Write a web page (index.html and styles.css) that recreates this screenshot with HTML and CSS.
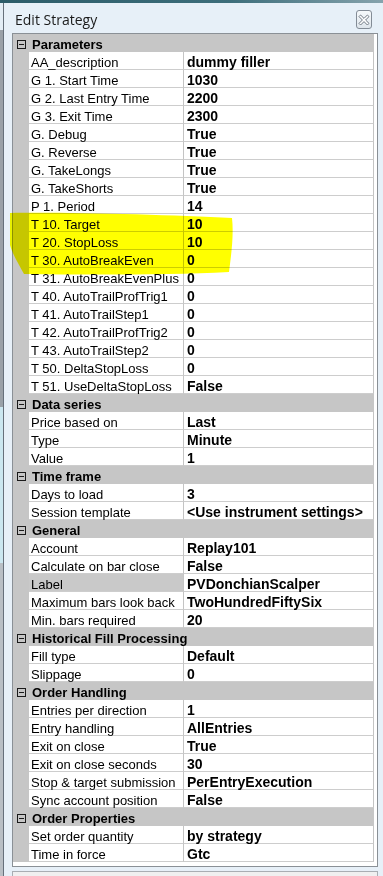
FILE: index.html
```html
<!DOCTYPE html>
<html lang="en">
<head>
    <meta charset="UTF-8">
    <title>Edit Strategy</title>
    <link rel="stylesheet" href="styles.css">
</head>
<body>
    <div class="topbar"></div>
    <div class="screen">
        <div class="behind"></div>
        <div class="window">
            <div class="titlebar">
                <span class="title">Edit Strategy</span>
                <span class="close">
                    <svg width="12" height="12" viewBox="0 0 12 12">
                        <path d="M1 2.6L2.6 1L6 4.4L9.4 1L11 2.6L7.6 6L11 9.4L9.4 11L6 7.6L2.6 11L1 9.4L4.4 6Z" fill="#fff" stroke="#6f7883" stroke-width="1" stroke-linejoin="round"/>
                    </svg>
                </span>
            </div>

            <div class="propgrid">
                <div class="rows">
                    <div class="cat"><span class="toggle"></span>Parameters</div>
                    <div class="row"><span class="gutter"></span><span class="name">AA_description</span><span class="value">dummy filler</span></div>
                    <div class="row"><span class="gutter"></span><span class="name">G 1. Start Time</span><span class="value">1030</span></div>
                    <div class="row"><span class="gutter"></span><span class="name">G 2. Last Entry Time</span><span class="value">2200</span></div>
                    <div class="row"><span class="gutter"></span><span class="name">G 3. Exit Time</span><span class="value">2300</span></div>
                    <div class="row"><span class="gutter"></span><span class="name">G. Debug</span><span class="value">True</span></div>
                    <div class="row"><span class="gutter"></span><span class="name">G. Reverse</span><span class="value">True</span></div>
                    <div class="row"><span class="gutter"></span><span class="name">G. TakeLongs</span><span class="value">True</span></div>
                    <div class="row"><span class="gutter"></span><span class="name">G. TakeShorts</span><span class="value">True</span></div>
                    <div class="row"><span class="gutter"></span><span class="name">P 1. Period</span><span class="value">14</span></div>
                    <div class="row"><span class="gutter"></span><span class="name">T 10. Target</span><span class="value">10</span></div>
                    <div class="row"><span class="gutter"></span><span class="name">T 20. StopLoss</span><span class="value">10</span></div>
                    <div class="row"><span class="gutter"></span><span class="name">T 30. AutoBreakEven</span><span class="value">0</span></div>
                    <div class="row"><span class="gutter"></span><span class="name">T 31. AutoBreakEvenPlus</span><span class="value">0</span></div>
                    <div class="row"><span class="gutter"></span><span class="name">T 40. AutoTrailProfTrig1</span><span class="value">0</span></div>
                    <div class="row"><span class="gutter"></span><span class="name">T 41. AutoTrailStep1</span><span class="value">0</span></div>
                    <div class="row"><span class="gutter"></span><span class="name">T 42. AutoTrailProfTrig2</span><span class="value">0</span></div>
                    <div class="row"><span class="gutter"></span><span class="name">T 43. AutoTrailStep2</span><span class="value">0</span></div>
                    <div class="row"><span class="gutter"></span><span class="name">T 50. DeltaStopLoss</span><span class="value">0</span></div>
                    <div class="row"><span class="gutter"></span><span class="name">T 51. UseDeltaStopLoss</span><span class="value">False</span></div>

                    <div class="cat"><span class="toggle"></span>Data series</div>
                    <div class="row"><span class="gutter"></span><span class="name">Price based on</span><span class="value">Last</span></div>
                    <div class="row"><span class="gutter"></span><span class="name">Type</span><span class="value">Minute</span></div>
                    <div class="row"><span class="gutter"></span><span class="name">Value</span><span class="value">1</span></div>

                    <div class="cat"><span class="toggle"></span>Time frame</div>
                    <div class="row"><span class="gutter"></span><span class="name">Days to load</span><span class="value">3</span></div>
                    <div class="row"><span class="gutter"></span><span class="name">Session template</span><span class="value">&lt;Use instrument settings&gt;</span></div>

                    <div class="cat"><span class="toggle"></span>General</div>
                    <div class="row"><span class="gutter"></span><span class="name">Account</span><span class="value">Replay101</span></div>
                    <div class="row"><span class="gutter"></span><span class="name">Calculate on bar close</span><span class="value">False</span></div>
                    <div class="row"><span class="gutter"></span><span class="name selected">Label</span><span class="value">PVDonchianScalper</span></div>
                    <div class="row"><span class="gutter"></span><span class="name">Maximum bars look back</span><span class="value">TwoHundredFiftySix</span></div>
                    <div class="row"><span class="gutter"></span><span class="name">Min. bars required</span><span class="value">20</span></div>

                    <div class="cat"><span class="toggle"></span>Historical Fill Processing</div>
                    <div class="row"><span class="gutter"></span><span class="name">Fill type</span><span class="value">Default</span></div>
                    <div class="row"><span class="gutter"></span><span class="name">Slippage</span><span class="value">0</span></div>

                    <div class="cat"><span class="toggle"></span>Order Handling</div>
                    <div class="row"><span class="gutter"></span><span class="name">Entries per direction</span><span class="value">1</span></div>
                    <div class="row"><span class="gutter"></span><span class="name">Entry handling</span><span class="value">AllEntries</span></div>
                    <div class="row"><span class="gutter"></span><span class="name">Exit on close</span><span class="value">True</span></div>
                    <div class="row"><span class="gutter"></span><span class="name">Exit on close seconds</span><span class="value">30</span></div>
                    <div class="row"><span class="gutter"></span><span class="name">Stop &amp; target submission</span><span class="value">PerEntryExecution</span></div>
                    <div class="row"><span class="gutter"></span><span class="name">Sync account position</span><span class="value">False</span></div>

                    <div class="cat"><span class="toggle"></span>Order Properties</div>
                    <div class="row"><span class="gutter"></span><span class="name">Set order quantity</span><span class="value">by strategy</span></div>
                    <div class="row"><span class="gutter"></span><span class="name">Time in force</span><span class="value">Gtc</span></div>
                </div>
            </div>
            <div class="help"></div>
        </div>
    </div>

    <!-- highlighter stroke over the T 10 - T 30 rows -->
    <svg class="marker" width="383" height="876" viewBox="0 0 383 876">
        <path d="M10 213 C70 212 170 215 232 218 C234 236 231 256 229 272 C170 275 90 275 24 274 C18 263 12 253 10 245 Z" fill="#ffff00"/>
    </svg>
</body>
</html>
```

FILE: styles.css
```css
body {
    margin: 0;
    width: 383px;
    height: 876px;
    overflow: hidden;
    background-color: #e7f0f8;
    font-family: "Liberation Sans", Arial, sans-serif;
    color: #000;
}
.topbar {
    height: 3px;
    background: linear-gradient(to right, #2c5c69, #3d6e7b 60%, #86a3ad);
}
.screen {
    display: flex;
}
.behind {
    width: 3px;
    height: 873px;
    background: linear-gradient(to bottom, #e3edf5 0, #e3edf5 27px, #9aa1a8 27px, #9aa1a8 404px, #cbe7f0 404px, #cbe7f0 560px, #b9bfc5 560px);
}
.window {
    width: 371px;
    border-left: 1px solid #66707b;
    padding-left: 8px;
    background-color: #e7f0f8;
}

/* title bar */
.titlebar {
    display: flex;
    align-items: flex-start;
    height: 23px;
    padding-top: 7px;
}
.title {
    margin-left: 3px;
    font-family: "Open Sans", sans-serif;
    font-size: 14px;
    line-height: 19px;
    color: #1b1b1b;
}
.close {
    display: flex;
    align-items: center;
    justify-content: center;
    margin-left: auto;
    margin-right: 11px;
    width: 14px;
    height: 17px;
    border: 1px solid #838c96;
    border-radius: 3px;
    background: linear-gradient(to bottom, #f6f9fb, #dfe6ec);
}

/* property grid */
.propgrid {
    width: 364px;
    border: 1px solid #8a9096;
    background-color: #fff;
    padding-bottom: 4px;
}
.rows {
    width: 361px;
}
.cat {
    display: flex;
    align-items: flex-start;
    height: 15px;
    padding: 3px 0 0 4px;
    background-color: #c6c6c6;
    font-weight: bold;
    font-size: 13px;
    line-height: 15px;
}
.toggle {
    position: relative;
    width: 7px;
    height: 7px;
    margin-top: 3px;
    margin-right: 6px;
    border: 1px solid #1a1a1a;
}
.toggle::after {
    content: "";
    position: absolute;
    left: 1px;
    top: 3px;
    width: 5px;
    height: 1px;
    background-color: #1a1a1a;
}
.row {
    display: flex;
    height: 18px;
}
.gutter {
    width: 16px;
    background-color: #c6c6c6;
}
.name, .value {
    box-sizing: border-box;
    height: 18px;
    padding-top: 3px;
    line-height: 15px;
    white-space: nowrap;
    border-bottom: 1px solid #cdcdcd;
    border-right: 1px solid #c4c4c4;
}
.name {
    width: 155px;
    padding-left: 2px;
    font-size: 13px;
}
.name.selected {
    background-color: #c9c9c9;
}
.value {
    width: 190px;
    padding-left: 3px;
    font-size: 14px;
    font-weight: bold;
}

/* description panel below the grid */
.help {
    margin-top: 4px;
    width: 364px;
    height: 10px;
    border: 1px solid #a9aeb3;
    background-color: #f0f0f0;
}

.marker {
    position: absolute;
    left: 0;
    top: 0;
    pointer-events: none;
    mix-blend-mode: multiply;
}
```
